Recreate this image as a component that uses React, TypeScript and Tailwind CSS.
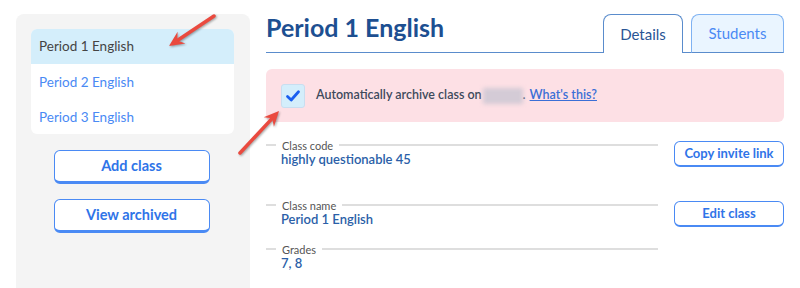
const font = { fontFamily: "Lato, 'Noto Sans', sans-serif" };

function Arrow({ x1, y1, x2, y2 }: { x1: number; y1: number; x2: number; y2: number }) {
  const dx = x2 - x1;
  const dy = y2 - y1;
  const len = Math.hypot(dx, dy);
  const ux = dx / len;
  const uy = dy / len;
  const px = -uy;
  const py = ux;
  const back = 15;
  const notch = 10;
  const half = 7;
  const wa = [x2 - ux * back + px * half, y2 - uy * back + py * half];
  const wb = [x2 - ux * back - px * half, y2 - uy * back - py * half];
  const n = [x2 - ux * notch, y2 - uy * notch];
  return (
    <g style={{ filter: "drop-shadow(1px 1px 1px rgba(0,0,0,0.35))" }}>
      <line x1={x1} y1={y1} x2={n[0]} y2={n[1]} stroke="#ea4a3f" strokeWidth={3.5} strokeLinecap="round" />
      <polygon points={`${x2},${y2} ${wa[0]},${wa[1]} ${n[0]},${n[1]} ${wb[0]},${wb[1]}`} fill="#ea4a3f" />
    </g>
  );
}

function Field({ label, value }: { label: string; value: string }) {
  return (
    <div className="flex-1">
      <div className="flex items-center h-[12px]">
        <div className="w-[10px] h-[2px] bg-[#dedede]" />
        <span className="px-[6px] text-[11px] leading-none text-[#555]">{label}</span>
        <div className="flex-1 h-[2px] bg-[#dedede]" />
      </div>
      <div className="pl-[15px] text-[13px] leading-[17px] font-semibold text-[#2b5fa8]">{value}</div>
    </div>
  );
}

function SmallButton({ children }: { children: string }) {
  return (
    <button className="w-[110px] h-[26px] mt-[2px] ml-[16px] rounded-md border-[1.5px] border-b-[2.5px] border-[#4a8af4] bg-white text-[13px] font-bold text-[#2f74e8]">
      {children}
    </button>
  );
}

export default function App() {
  return (
    <div className="relative w-[800px] h-[288px] overflow-hidden bg-white flex" style={font}>
      {/* sidebar */}
      <div className="ml-[16px] mt-[14px] w-[234px] bg-[#f4f4f4] rounded-t-lg px-[15px] pt-[15px]">
        <div className="w-[203px] bg-white rounded-md overflow-hidden">
          <div className="h-[35px] flex items-center px-[8px] bg-[#d4eefb] text-[13.5px] text-[#444]">Period 1 English</div>
          <div className="h-[36px] flex items-center px-[8px] text-[13.5px] text-[#4a8af4]">Period 2 English</div>
          <div className="h-[34px] flex items-center px-[8px] text-[13.5px] text-[#4a8af4]">Period 3 English</div>
        </div>
        <div className="flex flex-col items-center gap-[15px] mt-[16px] pr-[3px]">
          <button className="w-[156px] h-[34px] rounded-md border-[1.5px] border-b-[3px] border-[#4a8af4] bg-white text-[14.5px] font-bold text-[#2f74e8]">
            Add class
          </button>
          <button className="w-[156px] h-[34px] rounded-md border-[1.5px] border-b-[3px] border-[#4a8af4] bg-white text-[14.5px] font-bold text-[#2f74e8]">
            View archived
          </button>
        </div>
      </div>

      {/* main */}
      <div className="flex-1 ml-[16px] mr-[16px]">
        <div className="flex items-end h-[53px]">
          <div className="flex-1 h-full border-b-[1.5px] border-[#5a8ccc] flex items-center">
            <h1 className="text-[25px] font-bold text-[#1d4f91] mt-[4px]">Period 1 English</h1>
          </div>
          <div className="w-[80px] h-[39px] rounded-t-lg border-[1.5px] border-b-0 border-[#5a8ccc] bg-white flex items-center justify-center text-[15px] text-[#2a5595]">
            Details
          </div>
          <div className="w-[8px] h-full border-b-[1.5px] border-[#5a8ccc]" />
          <div className="w-[93px] h-[39px] rounded-t-lg border-[1.5px] border-[#7fb2f2] border-b-[#5a8ccc] bg-[#eaf5ff] flex items-center justify-center text-[15px] text-[#4a8af4]">
            Students
          </div>
        </div>

        <div className="mt-[16px] h-[53px] rounded-md bg-[#fde0e5] flex items-center pl-[15px]">
          <div className="w-[24px] h-[24px] rounded-[3px] bg-[#d4eefb] border border-[#c8def0] flex items-center justify-center">
            <svg width="16" height="16" viewBox="0 0 16 16">
              <path d="M2.5 8.5 L6.2 12 L13.5 3.8" fill="none" stroke="#1a5ff0" strokeWidth="2.8" strokeLinecap="round" strokeLinejoin="round" />
            </svg>
          </div>
          <span className="ml-[11px] text-[12.5px] font-semibold text-[#3d4a5c]">Automatically archive class on</span>
          <span className="inline-block w-[40px] h-[16px] bg-[#d4cbd6] blur-[2px] ml-[1px]" />
          <span className="text-[12.5px] font-semibold text-[#3d4a5c]">.</span>
          <a className="ml-[4px] text-[12.5px] font-semibold text-[#3b6fd6] underline">What's this?</a>
        </div>

        <div className="flex mt-[17px]">
          <Field label="Class code" value="highly questionable 45" />
          <SmallButton>Copy invite link</SmallButton>
        </div>
        <div className="flex mt-[31px]">
          <Field label="Class name" value="Period 1 English" />
          <SmallButton>Edit class</SmallButton>
        </div>
        <div className="flex mt-[15px]">
          <Field label="Grades" value="7, 8" />
          <div className="w-[126px]" />
        </div>
      </div>

      <svg className="absolute inset-0 pointer-events-none" width="800" height="288">
        <Arrow x1={214} y1={16} x2={169} y2={46} />
        <Arrow x1={240} y1={153} x2={279} y2={111} />
      </svg>
    </div>
  );
}
